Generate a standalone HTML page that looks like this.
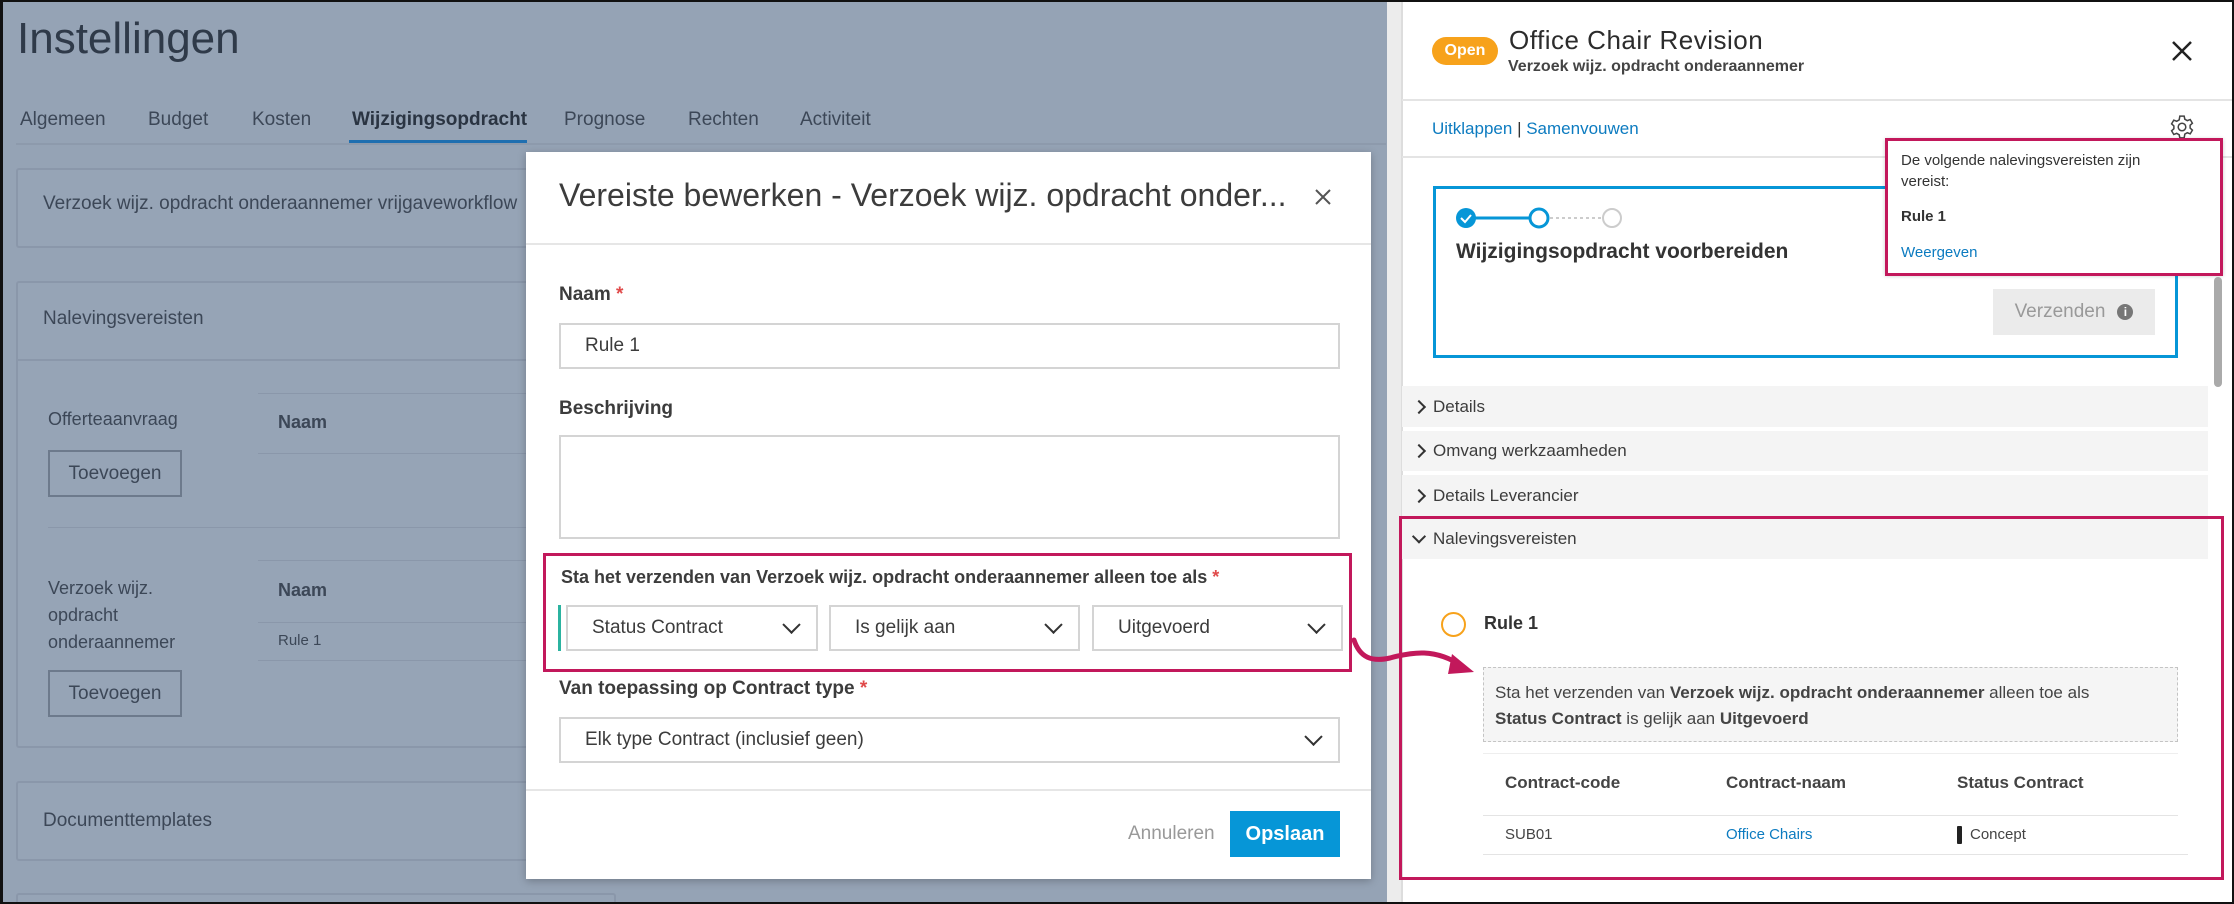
<!DOCTYPE html>
<html><head><meta charset="utf-8"><style>
*{box-sizing:border-box;margin:0;padding:0}
html,body{width:2234px;height:904px;overflow:hidden}
body{position:relative;background:#95a3b5;font-family:"Liberation Sans",sans-serif;color:#3c4757}
.a{position:absolute;white-space:nowrap}
.card{position:absolute;background:#96a4b6;border:2px solid #8a97aa;border-radius:3px}
.btn{position:absolute;border:2px solid #6d7a8c;font-size:19px;display:flex;align-items:center;justify-content:center;color:#3c4757}
.inp{position:absolute;background:#fff;border:2px solid #d4d4d4;font-size:19px;color:#3c3c3c;display:flex;align-items:center;padding-left:24px}
.chev{position:absolute;right:18px;top:50%;width:13px;height:13px;border-right:2.5px solid #333;border-bottom:2.5px solid #333;transform:translateY(-75%) rotate(45deg)}
.lbl{position:absolute;font-size:19px;font-weight:bold;color:#3c3c3c}
.star{color:#e04a4a}
.pink{position:absolute;border:3px solid #c2185b}
.acc{position:absolute;left:1402px;width:806px;background:#f4f4f4;font-size:17px;color:#3c3c3c;padding-left:31px;display:flex;align-items:center}
.acc i{position:absolute;left:12px;top:50%;width:10px;height:10px;border-right:2px solid #333;border-bottom:2px solid #333;transform:translateY(-50%) rotate(-45deg)}
</style></head><body>
<div class="a" style="left:17px;top:14px;font-size:44px;color:#2f3a49">Instellingen</div>
<div class="a" style="left:20px;top:109px;font-size:19px">Algemeen</div>
<div class="a" style="left:148px;top:109px;font-size:19px">Budget</div>
<div class="a" style="left:252px;top:109px;font-size:19px">Kosten</div>
<div class="a" style="left:352px;top:109px;font-size:19px;font-weight:bold;color:#2a3442">Wijzigingsopdracht</div>
<div class="a" style="left:349px;top:140px;width:178px;height:3px;background:#1f6fb0"></div>
<div class="a" style="left:564px;top:109px;font-size:19px">Prognose</div>
<div class="a" style="left:688px;top:109px;font-size:19px">Rechten</div>
<div class="a" style="left:800px;top:109px;font-size:19px">Activiteit</div>
<div class="a" style="left:16px;top:143px;width:1370px;height:2px;background:#8d9aac"></div>

<div class="card" style="left:16px;top:168px;width:600px;height:80px"></div>
<div class="a" style="left:43px;top:193px;font-size:19px">Verzoek wijz. opdracht onderaannemer vrijgaveworkflow</div>
<div class="card" style="left:16px;top:281px;width:600px;height:467px"></div>
<div class="a" style="left:16px;top:359px;width:600px;height:2px;background:#8a97aa"></div>
<div class="a" style="left:43px;top:308px;font-size:19px">Nalevingsvereisten</div>
<div class="a" style="left:48px;top:409px;font-size:18px">Offerteaanvraag</div>
<div class="a" style="left:258px;top:393px;width:300px;height:1px;background:#8a97aa"></div>
<div class="a" style="left:278px;top:412px;font-size:18px;font-weight:bold">Naam</div>
<div class="a" style="left:258px;top:453px;width:300px;height:1px;background:#8a97aa"></div>
<div class="btn" style="left:48px;top:450px;width:134px;height:47px">Toevoegen</div>
<div class="a" style="left:48px;top:527px;width:560px;height:1px;background:#8a97aa"></div>
<div class="a" style="left:48px;top:575px;font-size:18px;line-height:27px">Verzoek wijz.<br>opdracht<br>onderaannemer</div>
<div class="a" style="left:258px;top:560px;width:300px;height:1px;background:#8a97aa"></div>
<div class="a" style="left:278px;top:580px;font-size:18px;font-weight:bold">Naam</div>
<div class="a" style="left:258px;top:622px;width:300px;height:1px;background:#8a97aa"></div>
<div class="a" style="left:278px;top:632px;font-size:15px">Rule 1</div>
<div class="a" style="left:258px;top:660px;width:300px;height:1px;background:#8a97aa"></div>
<div class="btn" style="left:48px;top:670px;width:134px;height:47px">Toevoegen</div>
<div class="card" style="left:16px;top:781px;width:600px;height:80px"></div>
<div class="a" style="left:43px;top:810px;font-size:19px">Documenttemplates</div>
<div class="card" style="left:16px;top:893px;width:600px;height:30px"></div>
<div class="a" style="left:1387px;top:0;width:14px;height:904px;background:#ececec"></div>

<!-- modal -->
<div class="a" style="left:526px;top:152px;width:845px;height:727px;background:#fff;box-shadow:0 2px 8px rgba(0,0,0,.25)"></div>
<div class="a" style="left:559px;top:177px;font-size:32px;color:#3c3c3c">Vereiste bewerken - Verzoek wijz. opdracht onder...</div>
<svg class="a" style="left:1314px;top:188px" width="18" height="18"><path d="M2 2L16 16M16 2L2 16" stroke="#555" stroke-width="2"/></svg>
<div class="a" style="left:526px;top:243px;width:845px;height:2px;background:#e6e6e6"></div>
<div class="lbl" style="left:559px;top:284px">Naam <span class="star">*</span></div>
<div class="inp" style="left:559px;top:323px;width:781px;height:46px">Rule 1</div>
<div class="lbl" style="left:559px;top:398px">Beschrijving</div>
<div class="inp" style="left:559px;top:435px;width:781px;height:104px"></div>
<div class="lbl" style="left:561px;top:567px;font-size:18px">Sta het verzenden van Verzoek wijz. opdracht onderaannemer alleen toe als <span class="star">*</span></div>
<div class="a" style="left:558px;top:605px;width:3px;height:46px;background:#2bb3a0"></div>
<div class="inp" style="left:566px;top:605px;width:252px;height:46px">Status Contract<span class="chev"></span></div>
<div class="inp" style="left:829px;top:605px;width:251px;height:46px">Is gelijk aan<span class="chev"></span></div>
<div class="inp" style="left:1092px;top:605px;width:251px;height:46px">Uitgevoerd<span class="chev"></span></div>
<div class="pink" style="left:543px;top:553px;width:809px;height:119px"></div>
<div class="lbl" style="left:559px;top:678px">Van toepassing op Contract type <span class="star">*</span></div>
<div class="inp" style="left:559px;top:717px;width:781px;height:46px">Elk type Contract (inclusief geen)<span class="chev"></span></div>
<div class="a" style="left:526px;top:789px;width:845px;height:2px;background:#e6e6e6"></div>
<div class="a" style="left:1128px;top:823px;font-size:19px;color:#999">Annuleren</div>
<div class="a" style="left:1230px;top:811px;width:110px;height:46px;background:#0696d7;color:#fff;font-size:20px;font-weight:bold;display:flex;align-items:center;justify-content:center">Opslaan</div>

<!-- right panel -->
<div class="a" style="left:1401px;top:0;width:833px;height:904px;background:#fff;border-left:2px solid #ddd"></div>
<div class="a" style="left:1432px;top:37px;width:66px;height:28px;border-radius:14px;background:#f7a21b;color:#fff;font-size:16px;font-weight:bold;display:flex;align-items:center;justify-content:center">Open</div>
<div class="a" style="left:1509px;top:25px;font-size:26px;color:#2c2c2c;letter-spacing:.5px">Office Chair Revision</div>
<div class="a" style="left:1508px;top:58px;font-size:16px;font-weight:bold;color:#444">Verzoek wijz. opdracht onderaannemer</div>
<svg class="a" style="left:2171px;top:40px" width="22" height="22"><path d="M2 2L20 20M20 2L2 20" stroke="#222" stroke-width="2.5"/></svg>
<div class="a" style="left:1402px;top:99px;width:830px;height:2px;background:#e4e4e4"></div>
<div class="a" style="left:1432px;top:119px;font-size:17px;color:#0c7bc0">Uitklappen <span style="color:#333">|</span> Samenvouwen</div>
<svg class="a" style="left:2169px;top:114px" width="26" height="26" viewBox="0 0 24 24"><path d="M12 8.5a3.5 3.5 0 1 0 0 7 3.5 3.5 0 0 0 0-7zM10 2h4l.6 2.8 2.3 1.3 2.7-1 2 3.4-2.1 1.9v2.6l2.1 1.9-2 3.4-2.7-1-2.3 1.3L14 22h-4l-.6-2.8-2.3-1.3-2.7 1-2-3.4 2.1-1.9v-2.6L2.4 9.1l2-3.4 2.7 1 2.3-1.3z" fill="none" stroke="#444" stroke-width="1.4"/></svg>
<div class="a" style="left:1402px;top:156px;width:830px;height:2px;background:#e4e4e4"></div>

<div class="a" style="left:1433px;top:186px;width:745px;height:172px;border:3px solid #0696d7"></div>
<svg class="a" style="left:1450px;top:204px" width="180" height="30"><line x1="16" y1="14" x2="80" y2="14" stroke="#0696d7" stroke-width="3"/><line x1="100" y1="14" x2="152" y2="14" stroke="#ccc" stroke-width="2" stroke-dasharray="3 3"/><circle cx="16" cy="14" r="10" fill="#0696d7"/><path d="M11 14l4 4 6-7" stroke="#fff" stroke-width="2" fill="none"/><circle cx="89" cy="14" r="9" fill="#fff" stroke="#0696d7" stroke-width="3"/><circle cx="162" cy="14" r="9" fill="#fff" stroke="#ccc" stroke-width="2"/></svg>
<div class="a" style="left:1456px;top:240px;font-size:21px;font-weight:bold;color:#333">Wijzigingsopdracht voorbereiden</div>
<div class="a" style="left:1993px;top:289px;width:162px;height:46px;background:#ebebeb;color:#999;font-size:19px;display:flex;align-items:center;justify-content:center">Verzenden <span style="display:inline-block;width:16px;height:16px;border-radius:50%;background:#777;color:#fff;font-size:12px;text-align:center;line-height:16px;margin-left:12px;font-weight:bold">i</span></div>

<div class="a" style="left:1885px;top:138px;width:338px;height:137px;background:#fff;box-shadow:0 1px 4px rgba(0,0,0,.2)"></div>
<div class="a" style="left:1901px;top:150px;font-size:15px;color:#333;line-height:21px">De volgende nalevingsvereisten zijn<br>vereist:</div>
<div class="a" style="left:1901px;top:208px;font-size:15px;font-weight:bold;color:#333">Rule 1</div>
<div class="a" style="left:1901px;top:244px;font-size:15px;color:#0c7bc0">Weergeven</div>
<div class="pink" style="left:1885px;top:138px;width:338px;height:138px"></div>
<div class="a" style="left:2214px;top:277px;width:8px;height:110px;background:#aaa;border-radius:4px"></div>

<div class="acc" style="top:386px;height:41px"><i></i>Details</div>
<div class="acc" style="top:431px;height:40px"><i></i>Omvang werkzaamheden</div>
<div class="acc" style="top:475px;height:41px"><i></i>Details Leverancier</div>
<div class="acc" style="top:519px;height:40px"><i style="transform:translateY(-75%) rotate(45deg)"></i>Nalevingsvereisten</div>
<div class="a" style="left:1441px;top:612px;width:25px;height:25px;border-radius:50%;border:2.5px solid #f7a21b"></div>
<div class="a" style="left:1484px;top:613px;font-size:18px;font-weight:bold;color:#333">Rule 1</div>
<div class="a" style="left:1483px;top:667px;width:695px;height:75px;background:#f5f5f5;border:1.5px dashed #c4c4c4"></div>
<div class="a" style="left:1495px;top:680px;font-size:17px;color:#444;line-height:26px">Sta het verzenden van <b>Verzoek wijz. opdracht onderaannemer</b> alleen toe als<br><b>Status Contract</b> is gelijk aan <b>Uitgevoerd</b></div>
<div class="a" style="left:1483px;top:753px;width:695px;height:1px;background:#eee"></div>
<div class="a" style="left:1505px;top:773px;font-size:17px;font-weight:bold;color:#444">Contract-code</div>
<div class="a" style="left:1726px;top:773px;font-size:17px;font-weight:bold;color:#444">Contract-naam</div>
<div class="a" style="left:1957px;top:773px;font-size:17px;font-weight:bold;color:#444">Status Contract</div>
<div class="a" style="left:1483px;top:815px;width:695px;height:1px;background:#e4e4e4"></div>
<div class="a" style="left:1505px;top:826px;font-size:15px;color:#444">SUB01</div>
<div class="a" style="left:1726px;top:826px;font-size:15px;color:#0c7bc0">Office Chairs</div>
<div class="a" style="left:1957px;top:826px;width:5px;height:18px;background:#222;border-radius:1px"></div>
<div class="a" style="left:1970px;top:826px;font-size:15px;color:#444">Concept</div>
<div class="a" style="left:1483px;top:854px;width:705px;height:1px;background:#e4e4e4"></div>
<div class="pink" style="left:1399px;top:516px;width:825px;height:364px"></div>

<svg class="a" style="left:1350px;top:630px" width="140" height="60"><path d="M4 10 C10 28 22 32 40 28 C62 22 85 18 112 36" fill="none" stroke="#c2185b" stroke-width="5" stroke-linecap="round"/><path d="M102 24 L124 42 L98 44 Z" fill="#c2185b"/></svg>

<div class="a" style="left:0;top:0;width:3px;height:904px;background:#111"></div>
<div class="a" style="left:0;top:0;width:2234px;height:2px;background:#111"></div>
<div class="a" style="left:0;top:902px;width:2234px;height:2px;background:#111"></div>
<div class="a" style="left:2232px;top:0;width:2px;height:904px;background:#111"></div>
</body></html>
